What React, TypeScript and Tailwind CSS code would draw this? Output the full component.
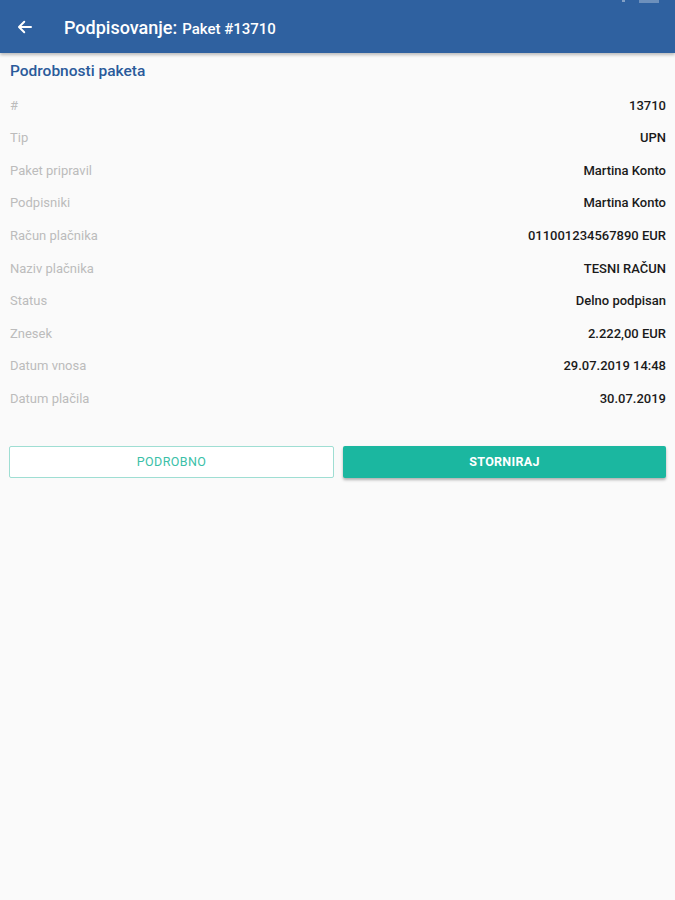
import React from 'react';

const rows: [string, string][] = [
  ['#', '13710'],
  ['Tip', 'UPN'],
  ['Paket pripravil', 'Martina Konto'],
  ['Podpisniki', 'Martina Konto'],
  ['Račun plačnika', '011001234567890 EUR'],
  ['Naziv plačnika', 'TESNI RAČUN'],
  ['Status', 'Delno podpisan'],
  ['Znesek', '2.222,00 EUR'],
  ['Datum vnosa', '29.07.2019 14:48'],
  ['Datum plačila', '30.07.2019'],
];

export default function App() {
  return (
    <div className="w-[675px] h-[900px] bg-[#fafafa] font-['Roboto','Liberation_Sans',sans-serif] overflow-hidden">
      {/* App bar */}
      <div className="relative h-[53px] bg-[#2f61a0] flex items-center shadow-[0_2px_3px_rgba(0,0,0,0.25)]">
        <div className="w-[64px] flex items-center pl-[16px]">
          <svg width="18" height="18" viewBox="0 0 24 24" fill="none" stroke="white" strokeWidth="2.6" strokeLinecap="round" strokeLinejoin="round">
            <path d="M20 12H5" />
            <path d="M11 5l-7 7 7 7" />
          </svg>
        </div>
        <div className="text-white flex items-baseline gap-[5px] pt-[2px]">
          <span className="text-[18px] font-medium">Podpisovanje:</span>
          <span className="text-[15px] font-medium">Paket #13710</span>
        </div>
        <div className="absolute top-0 right-[16px] flex gap-[14px]">
          <div className="w-[3px] h-[2px] bg-white/40" />
          <div className="w-[20px] h-[3px] bg-white/30" />
        </div>
      </div>

      {/* Details */}
      <div className="pl-[10px] pr-[9px] pt-[9px]">
        <div className="h-[20px] flex items-center text-[15.5px] font-medium text-[#2a5a9a]">Podrobnosti paketa</div>
        <div className="pt-[7px]">
          {rows.map(([label, value]) => (
            <div key={label} className="h-[32.6px] flex items-center justify-between text-[13px]">
              <span className="text-[#bcbcbc]">{label}</span>
              <span className="text-[#1a1a1a] font-medium">{value}</span>
            </div>
          ))}
        </div>

        {/* Buttons */}
        <div className="mt-[31px] -ml-[1px] flex gap-[9px]">
          <button className="flex-1 h-[32px] border border-[#9fded3] rounded-[2px] bg-white text-[#3bbfa8] text-[12.5px] tracking-[0.4px]">
            PODROBNO
          </button>
          <button className="flex-1 h-[32px] rounded-[2px] bg-[#1bb7a0] text-white text-[12.5px] font-bold tracking-[0.3px] shadow-[0_2px_3px_rgba(0,0,0,0.3)]">
            STORNIRAJ
          </button>
        </div>
      </div>
    </div>
  );
}
